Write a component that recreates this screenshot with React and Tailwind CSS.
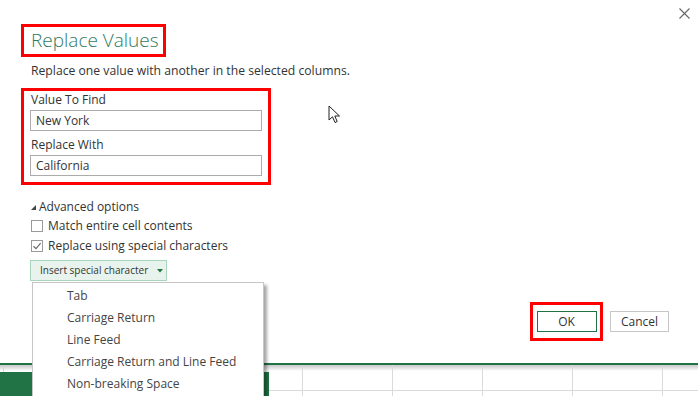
import React from 'react';

const font = { fontFamily: '"Open Sans", "Noto Sans", sans-serif' };

const Checkbox = ({ checked }) => (
  <span className="w-[12px] h-[12px] border border-[#9a9a9a] bg-white flex items-center justify-center">
    {checked && (
      <svg width="10" height="10" viewBox="0 0 10 10">
        <path d="M1.5 5.2 L4 7.6 L8.6 2.2" fill="none" stroke="#6b6b6b" strokeWidth="1.2" />
      </svg>
    )}
  </span>
);

const menuItems = ['Tab', 'Carriage Return', 'Line Feed', 'Carriage Return and Line Feed', 'Non-breaking Space'];

export default function App() {
  return (
    <div className="relative w-[698px] h-[396px] overflow-hidden bg-white text-[#333]" style={font}>
      {/* dialog */}
      <div className="h-[363px] flex flex-col pl-[21px] pt-[24px]">
        <div className="self-start border-[3px] border-[#ff0000] h-[33px] w-[145px] pl-[7px] flex items-center">
          <span className="text-[19px] font-light text-[#2f7b62] leading-none">Replace Values</span>
        </div>

        <p className="mt-[6px] pl-[10px] text-[12.2px] leading-[16px] whitespace-nowrap">
          Replace one value with another in the selected columns.
        </p>

        <div className="mt-[9px] self-start w-[250px] h-[97px] border-[3px] border-[#ff0000] pl-[6px] pt-[1px] flex flex-col">
          <span className="pl-[1px] text-[12px] leading-[16px]">Value To Find</span>
          <div className="mt-[2px] w-[232px] h-[21px] border border-[#ababab] px-[5px] flex items-center text-[12px]">
            New York
          </div>
          <span className="mt-[6px] pl-[1px] text-[12px] leading-[16px]">Replace With</span>
          <div className="mt-[2px] w-[232px] h-[21px] border border-[#ababab] px-[5px] flex items-center text-[12px]">
            California
          </div>
        </div>

        <div className="mt-[14px] pl-[10px] flex items-center gap-[3px] text-[12px] leading-[16px]">
          <svg width="5" height="5" viewBox="0 0 5 5">
            <path d="M5 0 L5 5 L0 5 Z" fill="#444" />
          </svg>
          <span>Advanced options</span>
        </div>

        <div className="mt-[3px] pl-[10px] flex items-center gap-[5px] text-[12px] leading-[16px]">
          <Checkbox />
          <span>Match entire cell contents</span>
        </div>
        <div className="mt-[4px] pl-[10px] flex items-center gap-[5px] text-[12px] leading-[16px]">
          <Checkbox checked />
          <span>Replace using special characters</span>
        </div>

        <div className="mt-[6px] ml-[9px] self-start w-[137px] h-[21px] bg-[#e7f3ec] border border-[#a8d5bc] flex items-center pl-[9px] gap-[9px] text-[10px] whitespace-nowrap">
          <span>Insert special character</span>
          <svg width="6" height="4" viewBox="0 0 6 4">
            <path d="M0 0 L6 0 L3 3.5 Z" fill="#217346" />
          </svg>
        </div>

        <div className="mt-[21px] flex justify-end items-center pr-[29px] gap-[7px]">
          <div className="border-[3px] border-[#ff0000] w-[73px] h-[39px] flex items-center justify-center">
            <div className="w-[60px] h-[21px] border border-[#217346] flex items-center justify-center text-[12px]">OK</div>
          </div>
          <div className="w-[59px] h-[21px] border border-[#c6c6c6] flex items-center justify-center text-[12px]">Cancel</div>
        </div>
      </div>

      {/* close */}
      <svg className="absolute left-[679px] top-[8px]" width="11" height="11" viewBox="0 0 11 11">
        <path d="M0.5 0.5 L10.5 10.5 M10.5 0.5 L0.5 10.5" stroke="#666" strokeWidth="1.1" />
      </svg>

      {/* mouse cursor */}
      <svg className="absolute left-[328px] top-[105px]" width="14" height="20" viewBox="0 0 14 20">
        <path d="M1 1 L1 15 L4.5 11.8 L7 17.5 L9.2 16.5 L6.8 11 L11.5 11 Z" fill="white" stroke="#222" strokeWidth="1" strokeLinejoin="round" />
      </svg>

      {/* spreadsheet behind */}
      <div className="h-[33px] border-t-2 border-[#217346] relative bg-white">
        <div className="h-[6px] bg-gradient-to-b from-[#c8c8c8] to-white" />
        <div className="absolute left-0 top-[7px] w-[269px] h-[26px] bg-[#217346]" />
        <div className="absolute left-[3px] top-0 w-px h-[7px] bg-[#d4d4d4]" />
        {[302, 392, 482, 572, 662].map((x) => (
          <div key={x} className="absolute top-0 bottom-0 w-px bg-[#dadada]" style={{ left: x }} />
        ))}
        <div className="absolute left-[269px] right-0 top-[25px] h-px bg-[#dadada]" />
      </div>

      {/* dropdown menu */}
      <div className="absolute left-[32px] top-[282px] w-[232px] h-[120px] bg-white border border-[#c6c6c6] shadow-[3px_3px_3px_rgba(0,0,0,0.35)] pt-[2px]">
        {menuItems.map((m) => (
          <div key={m} className="h-[22px] pl-[34px] flex items-center text-[12px] text-[#444]">
            {m}
          </div>
        ))}
      </div>
    </div>
  );
}
